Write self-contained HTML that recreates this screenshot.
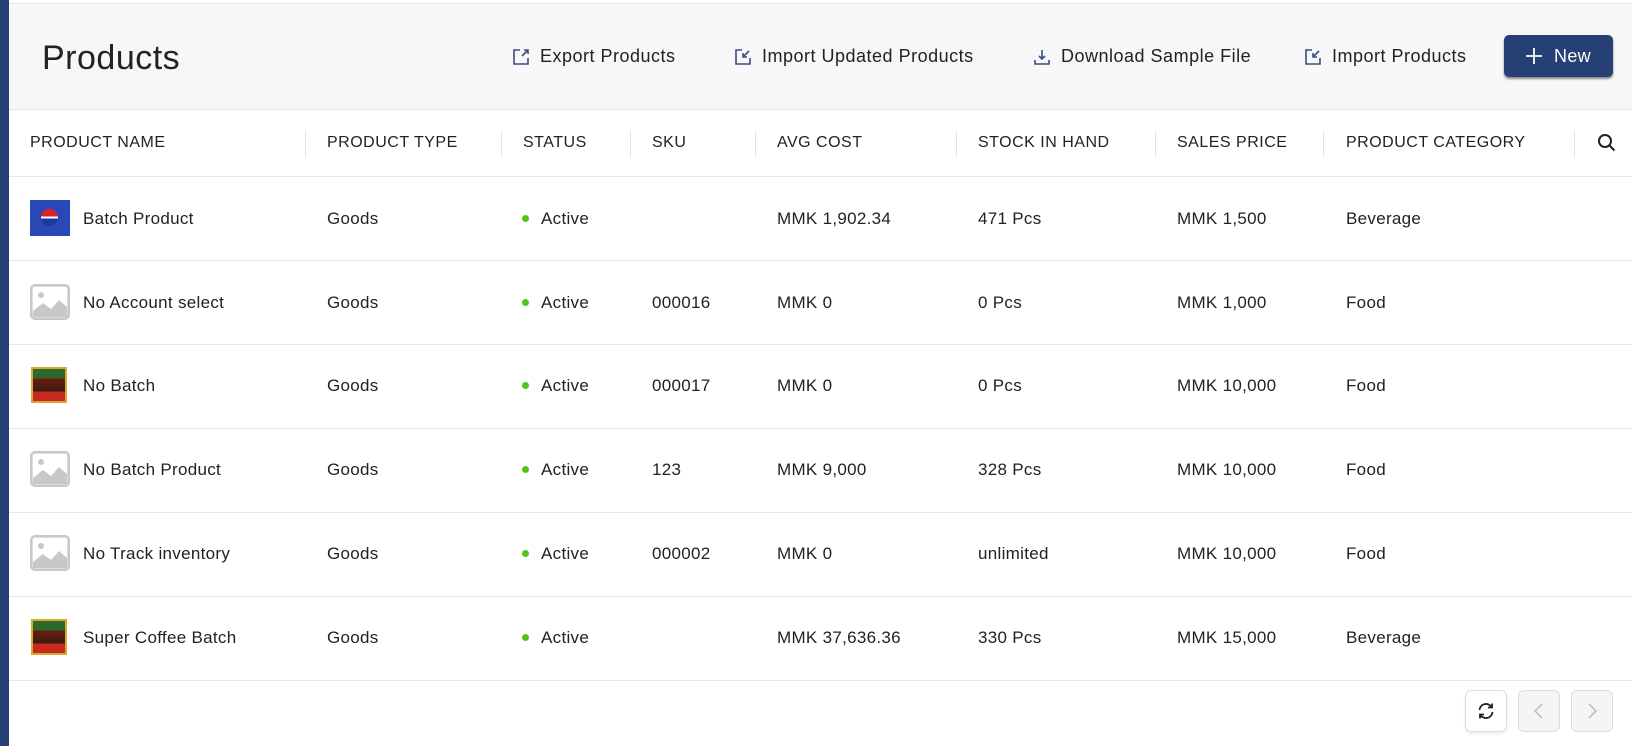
<!DOCTYPE html>
<html><head><meta charset="utf-8"><style>
*{box-sizing:border-box;margin:0;padding:0}
body{width:1632px;height:746px;overflow:hidden;background:#fff;font-family:"Liberation Sans",sans-serif;color:#222;position:relative;letter-spacing:0.3px}
.side{position:absolute;left:0;top:0;width:9px;height:746px;background:#263f75}
.hdr{position:absolute;left:9px;top:3px;right:0;height:107px;background:#f7f7f7;border-top:1px solid #e6e6e6;border-bottom:1px solid #e6e6e6}
.title{position:absolute;left:42px;top:39px;font-size:34px;color:#222;letter-spacing:0.5px}
.act{position:absolute;top:46px;font-size:18px;color:#222;display:flex;align-items:center;gap:10px;letter-spacing:0.5px}
.act svg{width:18px;height:18px}
.new{position:absolute;left:1504px;top:35px;width:109px;height:42px;background:#263f75;border-radius:5px;color:#fff;font-size:18px;display:flex;align-items:center;justify-content:center;gap:12px;box-shadow:0 2px 2px #888}
.t{position:absolute;font-size:17px;white-space:nowrap;transform:translateY(-50%)}
.th{font-size:16px;color:#222;letter-spacing:0.5px}
.sep{position:absolute;top:130px;width:1px;height:28px;background:#e5e5e5}
.ln{position:absolute;left:9px;right:0;height:1px;background:#e8e8e8}
.dot{position:absolute;width:7px;height:7px;border-radius:50%;background:#52c41a;left:522px}
.img{position:absolute;left:30px;width:40px;height:36px}
.pb{position:absolute;top:690px;width:42px;height:42px;border:1px solid #ddd;border-radius:6px;display:flex;align-items:center;justify-content:center}
</style></head><body>
<div class="side"></div>
<div class="hdr"></div>
<div class="title">Products</div>
<div class="act" style="left:512px"><svg viewBox="0 0 18 18" fill="none" stroke="#3b4d80" stroke-width="1.6"><path d="M8 2H2v14h14v-6M10 8l6-6M12 2h4v4"/></svg>Export Products</div>
<div class="act" style="left:734px"><svg viewBox="0 0 18 18" fill="none" stroke="#3b4d80" stroke-width="1.6"><path d="M8 2H2v14h14v-6M9 9l6-6M9 5v4h4"/></svg>Import Updated Products</div>
<div class="act" style="left:1033px"><svg viewBox="0 0 18 18" fill="none" stroke="#3b4d80" stroke-width="1.6"><path d="M9 2v9M6 8l3 3 3-3M2 12v4h14v-4"/></svg>Download Sample File</div>
<div class="act" style="left:1304px"><svg viewBox="0 0 18 18" fill="none" stroke="#3b4d80" stroke-width="1.6"><path d="M8 2H2v14h14v-6M9 9l6-6M9 5v4h4"/></svg>Import Products</div>
<div class="new"><svg width="16" height="16" viewBox="0 0 16 16" stroke="#fff" stroke-width="1.8"><path d="M8 0v16M0 8h16"/></svg>New</div>

<div class="t th" style="left:30px;top:143px">PRODUCT NAME</div>
<div class="t th" style="left:327px;top:143px">PRODUCT TYPE</div>
<div class="t th" style="left:523px;top:143px">STATUS</div>
<div class="t th" style="left:652px;top:143px">SKU</div>
<div class="t th" style="left:777px;top:143px">AVG COST</div>
<div class="t th" style="left:978px;top:143px">STOCK IN HAND</div>
<div class="t th" style="left:1177px;top:143px">SALES PRICE</div>
<div class="t th" style="left:1346px;top:143px">PRODUCT CATEGORY</div>
<svg style="position:absolute;left:1597px;top:133px" width="20" height="20" viewBox="0 0 20 20" fill="none" stroke="#222" stroke-width="2"><circle cx="8" cy="8" r="6"/><path d="M12.5 12.5l5 5"/></svg>
<div class="sep" style="left:305px"></div><div class="sep" style="left:501px"></div><div class="sep" style="left:630px"></div><div class="sep" style="left:755px"></div><div class="sep" style="left:956px"></div><div class="sep" style="left:1155px"></div><div class="sep" style="left:1323px"></div><div class="sep" style="left:1574px"></div>
<div class="ln" style="top:176px"></div>
<div class="ln" style="top:260px"></div>
<div class="ln" style="top:344px"></div>
<div class="ln" style="top:428px"></div>
<div class="ln" style="top:512px"></div>
<div class="ln" style="top:596px"></div>
<div class="ln" style="top:680px"></div>

<div class="img" style="top:200px;background:#2a47b8"><div style="position:absolute;left:11px;top:9px;width:17px;height:17px;border-radius:50%;background:linear-gradient(#d22 45%,#fff 45%,#fff 55%,#1a3aa0 55%)"></div></div>
<div class="t" style="left:83px;top:219px">Batch Product</div><div class="t" style="left:327px;top:219px">Goods</div><div class="dot" style="top:215px"></div><div class="t" style="left:541px;top:219px">Active</div><div class="t" style="left:777px;top:219px">MMK 1,902.34</div><div class="t" style="left:978px;top:219px">471 Pcs</div><div class="t" style="left:1177px;top:219px">MMK 1,500</div><div class="t" style="left:1346px;top:219px">Beverage</div>

<svg class="img" style="top:284px" viewBox="0 0 40 36"><rect x="1" y="1" width="38" height="34" rx="4" fill="#ddd" stroke="#c8c8c8" stroke-width="2"/><rect x="3" y="3" width="34" height="30" rx="2" fill="#fff"/><circle cx="11" cy="11" r="3" fill="#c8c8c8"/><path d="M3 27l10-8 8 6 8-9 8 7v10H3z" fill="#c8c8c8"/></svg>
<div class="t" style="left:83px;top:303px">No Account select</div><div class="t" style="left:327px;top:303px">Goods</div><div class="dot" style="top:299px"></div><div class="t" style="left:541px;top:303px">Active</div><div class="t" style="left:652px;top:303px">000016</div><div class="t" style="left:777px;top:303px">MMK 0</div><div class="t" style="left:978px;top:303px">0 Pcs</div><div class="t" style="left:1177px;top:303px">MMK 1,000</div><div class="t" style="left:1346px;top:303px">Food</div>

<div class="img" style="top:367px;left:31px;width:36px;background:linear-gradient(#2d6a2a 30%,#6b1d10 30%,#3a1a12 70%,#c82a1e 70%);border:2px solid #d8a830"></div>
<div class="t" style="left:83px;top:386px">No Batch</div><div class="t" style="left:327px;top:386px">Goods</div><div class="dot" style="top:382px"></div><div class="t" style="left:541px;top:386px">Active</div><div class="t" style="left:652px;top:386px">000017</div><div class="t" style="left:777px;top:386px">MMK 0</div><div class="t" style="left:978px;top:386px">0 Pcs</div><div class="t" style="left:1177px;top:386px">MMK 10,000</div><div class="t" style="left:1346px;top:386px">Food</div>

<svg class="img" style="top:451px" viewBox="0 0 40 36"><rect x="1" y="1" width="38" height="34" rx="4" fill="#ddd" stroke="#c8c8c8" stroke-width="2"/><rect x="3" y="3" width="34" height="30" rx="2" fill="#fff"/><circle cx="11" cy="11" r="3" fill="#c8c8c8"/><path d="M3 27l10-8 8 6 8-9 8 7v10H3z" fill="#c8c8c8"/></svg>
<div class="t" style="left:83px;top:470px">No Batch Product</div><div class="t" style="left:327px;top:470px">Goods</div><div class="dot" style="top:466px"></div><div class="t" style="left:541px;top:470px">Active</div><div class="t" style="left:652px;top:470px">123</div><div class="t" style="left:777px;top:470px">MMK 9,000</div><div class="t" style="left:978px;top:470px">328 Pcs</div><div class="t" style="left:1177px;top:470px">MMK 10,000</div><div class="t" style="left:1346px;top:470px">Food</div>

<svg class="img" style="top:535px" viewBox="0 0 40 36"><rect x="1" y="1" width="38" height="34" rx="4" fill="#ddd" stroke="#c8c8c8" stroke-width="2"/><rect x="3" y="3" width="34" height="30" rx="2" fill="#fff"/><circle cx="11" cy="11" r="3" fill="#c8c8c8"/><path d="M3 27l10-8 8 6 8-9 8 7v10H3z" fill="#c8c8c8"/></svg>
<div class="t" style="left:83px;top:554px">No Track inventory</div><div class="t" style="left:327px;top:554px">Goods</div><div class="dot" style="top:550px"></div><div class="t" style="left:541px;top:554px">Active</div><div class="t" style="left:652px;top:554px">000002</div><div class="t" style="left:777px;top:554px">MMK 0</div><div class="t" style="left:978px;top:554px">unlimited</div><div class="t" style="left:1177px;top:554px">MMK 10,000</div><div class="t" style="left:1346px;top:554px">Food</div>

<div class="img" style="top:619px;left:31px;width:36px;background:linear-gradient(#2d6a2a 30%,#6b1d10 30%,#3a1a12 70%,#c82a1e 70%);border:2px solid #d8a830"></div>
<div class="t" style="left:83px;top:638px">Super Coffee Batch</div><div class="t" style="left:327px;top:638px">Goods</div><div class="dot" style="top:634px"></div><div class="t" style="left:541px;top:638px">Active</div><div class="t" style="left:777px;top:638px">MMK 37,636.36</div><div class="t" style="left:978px;top:638px">330 Pcs</div><div class="t" style="left:1177px;top:638px">MMK 15,000</div><div class="t" style="left:1346px;top:638px">Beverage</div>

<div class="pb" style="left:1465px;box-shadow:0 2px 3px #eee"><svg width="20" height="20" viewBox="0 0 20 20" fill="none" stroke="#222" stroke-width="1.8"><path d="M3.5 9A6.5 6.5 0 0 1 15.5 6M16.5 11A6.5 6.5 0 0 1 4.5 14"/><path d="M16 2.5V6.5H12M4 17.5V13.5H8"/></svg></div>
<div class="pb" style="left:1518px;background:#f5f5f5"><svg width="12" height="18" viewBox="0 0 12 18" fill="none" stroke="#bbb" stroke-width="1.5"><path d="M9 2L2 9l7 7"/></svg></div>
<div class="pb" style="left:1571px;background:#f5f5f5"><svg width="12" height="18" viewBox="0 0 12 18" fill="none" stroke="#bbb" stroke-width="1.5"><path d="M3 2l7 7-7 7"/></svg></div>
</body></html>
